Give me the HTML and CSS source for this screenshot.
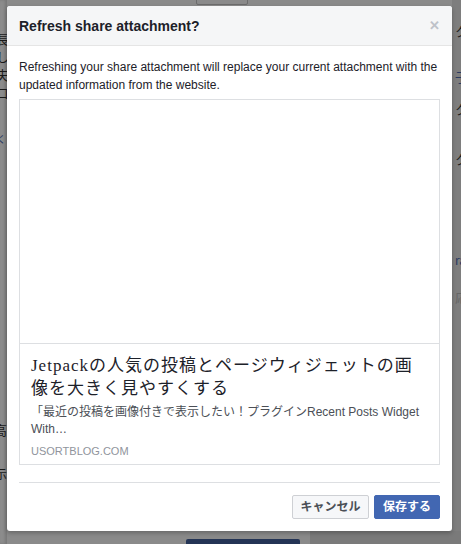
FILE: index.html
```html
<!DOCTYPE html>
<html>
<head>
<meta charset="utf-8">
<link rel="stylesheet" href="styles.css">
</head>
<body>
<div class="backdrop">
  <div class="bg-left">
    <span class="bg-char c1">長</span>
    <span class="bg-char c2">し</span>
    <span class="bg-char c3">夫</span>
    <span class="bg-char c4">コ</span>
    <span class="bg-link c5">く</span>
    <span class="bg-char c6">高</span>
    <span class="bg-char c7">示</span>
  </div>
  <div class="bg-right">
    <span class="bg-char r1">ク</span>
    <span class="bg-link r2">子</span>
    <span class="bg-char r4">ク</span>
    <span class="bg-char r5">ク</span>
    <span class="bg-link r6">ra</span>
    <span class="bg-char r7">応</span>
  </div>
  <div class="bg-bottom-right"></div>
  <div class="bg-button"></div>
  <div class="bg-top-box"></div>
</div>

<div class="dialog">
  <div class="dialog-header">
    <span class="dialog-title">Refresh share attachment?</span>
    <span class="close">&#x2715;</span>
  </div>
  <div class="dialog-body">
    <p class="intro">Refreshing your share attachment will replace your current attachment with the updated information from the website.</p>
    <div class="card">
      <div class="card-image"></div>
      <div class="card-info">
        <div class="card-title">Jetpackの人気の投稿とページウィジェットの画<br>像を大きく見やすくする</div>
        <div class="card-desc">「最近の投稿を画像付きで表示したい！プラグインRecent Posts Widget With…</div>
        <div class="card-domain">USORTBLOG.COM</div>
      </div>
    </div>
  </div>
  <div class="dialog-footer">
    <button class="btn btn-cancel">キャンセル</button>
    <button class="btn btn-save">保存する</button>
  </div>
</div>
</body>
</html>
```

FILE: styles.css
```css
html, body {
  margin: 0;
  padding: 0;
}
body {
  width: 461px;
  height: 544px;
  background: #8a8a8a;
  font-family: "Liberation Sans", "Noto Sans CJK JP", sans-serif;
  position: relative;
  overflow: hidden;
}
.backdrop {
  position: absolute;
  inset: 0;
}
.bg-left {
  position: absolute;
  left: 0;
  top: 0;
  width: 7px;
  height: 544px;
  background: #8c8c8c;
  box-shadow: inset -2px 0 3px rgba(0,0,0,0.15);
  overflow: hidden;
}
.bg-right {
  position: absolute;
  left: 452px;
  top: 0;
  width: 9px;
  height: 544px;
  background: #7e7e7e;
  overflow: hidden;
}
.bg-char, .bg-link {
  position: absolute;
  font-size: 13px;
  color: #1a1a1a;
  font-family: "Noto Sans CJK JP", sans-serif;
  line-height: 1;
}
.bg-link { color: #2a3a60; }
.bg-left .bg-char, .bg-left .bg-link { left: -4px; }
.c1 { top: 32px; }
.c2 { top: 50px; }
.c3 { top: 68px; }
.c4 { top: 86px; }
.c5 { top: 134px; font-size: 10px; }
.c6 { top: 423px; left: -6px !important; }
.c7 { top: 468px; left: -5px !important; font-size: 12px; }
.bg-right .bg-char, .bg-right .bg-link { left: 3px; }
.r1 { top: 24px; }
.r2 { top: 70px; }
.r4 { top: 102px; }
.r5 { top: 152px; }
.r6 { top: 254px; font-size: 12px; }
.r7 { top: 290px; color: #666 !important; }
.bg-bottom-right {
  position: absolute;
  left: 310px;
  top: 531px;
  width: 151px;
  height: 13px;
  background: #7a7a7a;
}
.bg-button {
  position: absolute;
  left: 186px;
  top: 539px;
  width: 114px;
  height: 10px;
  background: #243455;
  border-radius: 2px;
}
.bg-top-box {
  position: absolute;
  left: 196px;
  top: -4px;
  width: 50px;
  height: 7px;
  border: 1px solid #6c6c6c;
  border-radius: 2px;
}

.dialog {
  position: absolute;
  left: 7px;
  top: 6px;
  width: 445px;
  height: 525px;
  background: #fff;
  border-radius: 3px;
  box-shadow: 0 2px 4px rgba(0,0,0,0.25);
  display: flex;
  flex-direction: column;
  overflow: hidden;
}
.dialog-header {
  height: 39px;
  flex: none;
  background: #f5f6f7;
  border-bottom: 1px solid #e5e5e5;
  display: flex;
  align-items: center;
  justify-content: space-between;
  padding: 0 12px;
}
.dialog-title {
  font-size: 14px;
  font-weight: bold;
  color: #1d2129;
}
.close {
  font-size: 13px;
  font-weight: bold;
  color: #bec2c9;
}
.dialog-body {
  padding: 12px 12px 0;
}
.intro {
  margin: 0 0 5px;
  font-size: 12px;
  line-height: 18px;
  color: #1d2129;
}
.card {
  border: 1px solid #dddfe2;
  width: 419px;
}
.card-image {
  height: 243px;
  border-bottom: 1px solid #dddfe2;
}
.card-info {
  padding: 10px 10px 5px 11px;
}
.card-title {
  font-family: "Liberation Serif", "Noto Sans CJK JP", serif;
  font-size: 17px;
  line-height: 23px;
  color: #1d2129;
  letter-spacing: 1px;
  white-space: nowrap;
}
.card-desc {
  margin-top: 4px;
  font-size: 12px;
  line-height: 17px;
  color: #4b4f56;
}
.card-domain {
  margin-top: 5px;
  font-size: 11px;
  line-height: 16px;
  color: #90949c;
}
.dialog-footer {
  margin: 17px 12px 0;
  border-top: 1px solid #dddfe2;
  padding-top: 12px;
  display: flex;
  justify-content: flex-end;
  gap: 5px;
}
.btn {
  height: 24px;
  padding: 0 2px;
  font-family: "Liberation Sans", "Noto Sans CJK JP", sans-serif;
  font-size: 12px;
  font-weight: bold;
  border-radius: 2px;
  border: 1px solid;
  line-height: 22px;
  white-space: nowrap;
}
.btn-cancel {
  width: 77px;
  background: #f6f7f9;
  border-color: #ced0d4;
  color: #4b4f56;
}
.btn-save {
  width: 66px;
  background: #4267b2;
  border-color: #4267b2;
  color: #fff;
}
```
